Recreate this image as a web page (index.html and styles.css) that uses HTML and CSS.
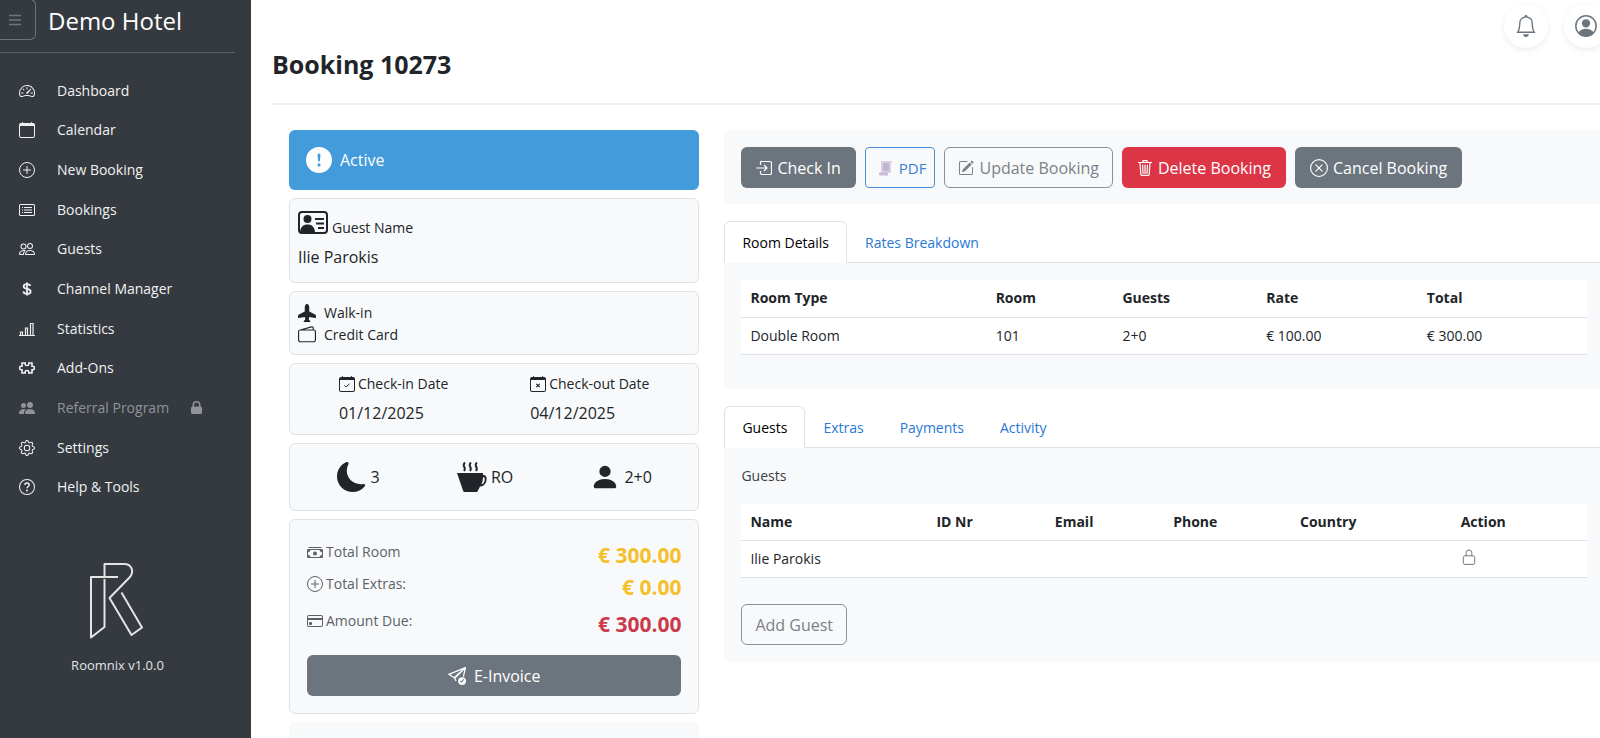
FILE: index.html
```html
<!DOCTYPE html>
<html lang="en">
<head>
    <meta charset="UTF-8">
    <meta name="viewport" content="width=device-width, initial-scale=1.0">
    <title>Booking 10273 | Demo Hotel</title>
    <link rel="stylesheet" href="styles.css">
</head>
<body>
    <div class="app">
        <aside class="sidebar">
            <div class="sidebar-header">
                <button class="menu-toggle" aria-label="Toggle menu">
                    <svg class="icon" viewBox="0 0 16 16"><path d="M2 3.5h12M2 8h12M2 12.5h12" fill="none" stroke="currentColor" stroke-width="1.3"/></svg>
                </button>
                <span class="hotel-name">Demo Hotel</span>
            </div>

            <ul class="nav-list">
                <li><a href="#"><svg class="icon" viewBox="0 0 16 16"><path d="M8 4a.5.5 0 0 1 .5.5V6a.5.5 0 0 1-1 0V4.5A.5.5 0 0 1 8 4zM3.732 5.732a.5.5 0 0 1 .707 0l.915.914a.5.5 0 1 1-.708.708l-.914-.915a.5.5 0 0 1 0-.707zM2 10a.5.5 0 0 1 .5-.5h1.586a.5.5 0 0 1 0 1H2.5A.5.5 0 0 1 2 10zm9.5 0a.5.5 0 0 1 .5-.5h1.5a.5.5 0 0 1 0 1H12a.5.5 0 0 1-.5-.5zm.754-4.246a.389.389 0 0 0-.527-.02L7.547 9.31a.91.91 0 1 0 1.302 1.258l3.434-4.297a.389.389 0 0 0-.029-.518z"/><path fill-rule="evenodd" d="M0 10a8 8 0 1 1 15.547 2.661c-.442 1.253-1.845 1.602-2.932 1.25C11.309 13.488 9.475 13 8 13c-1.474 0-3.31.488-4.615.911-1.087.352-2.49.003-2.932-1.25A7.988 7.988 0 0 1 0 10zm8-7a7 7 0 0 0-6.603 9.329c.203.575.923.876 1.68.63C4.397 12.533 6.358 12 8 12s3.604.532 4.923.96c.757.245 1.477-.056 1.68-.631A7 7 0 0 0 8 3z"/></svg>Dashboard</a></li>
                <li><a href="#"><svg class="icon" viewBox="0 0 16 16"><path d="M3.5 0a.5.5 0 0 1 .5.5V1h8V.5a.5.5 0 0 1 1 0V1h1a2 2 0 0 1 2 2v11a2 2 0 0 1-2 2H2a2 2 0 0 1-2-2V3a2 2 0 0 1 2-2h1V.5a.5.5 0 0 1 .5-.5zM1 4v10a1 1 0 0 0 1 1h12a1 1 0 0 0 1-1V4H1z"/></svg>Calendar</a></li>
                <li><a href="#"><svg class="icon" viewBox="0 0 16 16"><path d="M8 4.5v7M4.500 8h7" fill="none" stroke="currentColor" stroke-linecap="round"/><circle cx="8" cy="8" r="7.500" fill="none" stroke="currentColor"/></svg>New Booking</a></li>
                <li><a href="#"><svg class="icon" viewBox="0 0 16 16"><path d="M14.500 3a.5.5 0 0 1 .5.5v9a.5.5 0 0 1-.5.5h-13a.5.5 0 0 1-.5-.5v-9a.5.5 0 0 1 .5-.5h13zm-13-1A1.500 1.500 0 0 0 0 3.500v9A1.500 1.500 0 0 0 1.500 14h13a1.500 1.500 0 0 0 1.500-1.500v-9A1.500 1.500 0 0 0 14.500 2h-13z"/><path d="M5 5.500h8M5 8h8M5 10.500h8M3 5.500h1M3 8h1M3 10.500h1" fill="none" stroke="currentColor"/></svg>Bookings</a></li>
                <li><a href="#"><svg class="icon" viewBox="0 0 16 16"><path d="M15 14s1 0 1-1-1-4-5-4-5 3-5 4 1 1 1 1h8zm-7.978-1A.261.261 0 0 1 7 12.996c.001-.264.167-1.030.76-1.720C8.312 10.629 9.282 10 11 10c1.717 0 2.687.63 3.240 1.276.593.69.758 1.457.76 1.720l-.008.002a.274.274 0 0 1-.014.002H7.022zM11 7a2 2 0 1 0 0-4 2 2 0 0 0 0 4zm3-2a3 3 0 1 1-6 0 3 3 0 0 1 6 0zM6.936 9.280a5.880 5.880 0 0 0-1.230-.247A7.350 7.350 0 0 0 5 9c-4 0-5 3-5 4 0 .667.333 1 1 1h4.216A2.238 2.238 0 0 1 5 13c0-1.010.377-2.042 1.090-2.904.243-.294.526-.569.846-.816zM4.920 10A5.493 5.493 0 0 0 4 13H1c0-.26.164-1.030.76-1.724.545-.636 1.492-1.256 3.160-1.275zM1.500 5.500a3 3 0 1 1 6 0 3 3 0 0 1-6 0zm3-2a2 2 0 1 0 0 4 2 2 0 0 0 0-4z"/></svg>Guests</a></li>
                <li><a href="#"><svg class="icon" viewBox="0 0 16 16"><path d="M8 1.500v13M11.300 5C11.100 3.600 9.800 3.100 8 3.100c-1.900 0-3.300.8-3.300 2.300 0 3.500 6.900 1.500 6.900 5 0 1.600-1.500 2.500-3.500 2.500s-3.500-.8-3.700-2.500" fill="none" stroke="currentColor" stroke-width="1.800"/></svg>Channel Manager</a></li>
                <li><a href="#"><svg class="icon" viewBox="0 0 16 16"><path d="M0 14.500h16M1.500 14.500v-3.500h2v3.500M6.500 14.500v-7.500h2v7.500M11.500 14.500v-12h2.500v12" fill="none" stroke="currentColor" stroke-width="1.200"/></svg>Statistics</a></li>
                <li><a href="#"><svg class="icon" viewBox="0 0 16 16"><path d="M3 3h3.200v1.500c0 .7.600 1 1.800 1s1.800-.3 1.800-1V3H13v3.200h.8c.9 0 1.600.7 1.600 1.800s-.7 1.800-1.600 1.800H13V13H9.800v-1.500c0-.7-.6-1-1.800-1s-1.800.3-1.800 1V13H3V9.800h-.8C1.300 9.800.600 9.100.600 8s.7-1.800 1.600-1.800H3z" fill="none" stroke="currentColor" stroke-width="1.600"/></svg>Add-Ons</a></li>
                <li class="locked"><a href="#"><svg class="icon" viewBox="0 0 16 16"><path d="M7 14s-1 0-1-1 1-4 5-4 5 3 5 4-1 1-1 1H7zm4-6a3 3 0 1 0 0-6 3 3 0 0 0 0 6zM5.216 14A2.238 2.238 0 0 1 5 13c0-1.355.68-2.750 1.936-3.720A6.325 6.325 0 0 0 5 9c-4 0-5 3-5 4s1 1 1 1h4.216zM4.500 8a2.500 2.500 0 1 0 0-5 2.500 2.500 0 0 0 0 5z"/></svg>Referral Program<svg class="icon icon-lock" viewBox="0 0 11 13"><path d="M1.500 5.500V4a4 4 0 0 1 8 0v1.500A1.500 1.500 0 0 1 11 7v4.500A1.500 1.500 0 0 1 9.500 13h-8A1.500 1.500 0 0 1 0 11.500V7a1.500 1.500 0 0 1 1.500-1.500zm1.500 0h5V4a2.500 2.500 0 0 0-5 0z"/></svg></a></li>
                <li><a href="#"><svg class="icon" viewBox="0 0 16 16"><path d="M8 4.754a3.246 3.246 0 1 0 0 6.492 3.246 3.246 0 0 0 0-6.492zM5.754 8a2.246 2.246 0 1 1 4.492 0 2.246 2.246 0 0 1-4.492 0z"/><path d="M9.796 1.343c-.527-1.790-3.065-1.790-3.592 0l-.094.319a.873.873 0 0 1-1.255.52l-.292-.16c-1.640-.892-3.433.902-2.540 2.541l.159.292a.873.873 0 0 1-.52 1.255l-.319.094c-1.790.527-1.790 3.065 0 3.592l.319.094a.873.873 0 0 1 .52 1.255l-.16.292c-.892 1.640.901 3.434 2.541 2.540l.292-.159a.873.873 0 0 1 1.255.52l.094.319c.527 1.790 3.065 1.790 3.592 0l.094-.319a.873.873 0 0 1 1.255-.52l.292.16c1.640.893 3.434-.902 2.540-2.541l-.159-.292a.873.873 0 0 1 .52-1.255l.319-.094c1.790-.527 1.790-3.065 0-3.592l-.319-.094a.873.873 0 0 1-.52-1.255l.16-.292c.893-1.640-.902-3.433-2.541-2.540l-.292.159a.873.873 0 0 1-1.255-.52l-.094-.319zm-2.633.283c.246-.835 1.428-.835 1.674 0l.094.319a1.873 1.873 0 0 0 2.693 1.115l.291-.16c.764-.415 1.600.42 1.184 1.185l-.159.292a1.873 1.873 0 0 0 1.116 2.692l.318.094c.835.246.835 1.428 0 1.674l-.319.094a1.873 1.873 0 0 0-1.115 2.693l.16.291c.415.764-.42 1.600-1.185 1.184l-.291-.159a1.873 1.873 0 0 0-2.693 1.116l-.094.318c-.246.835-1.428.835-1.674 0l-.094-.319a1.873 1.873 0 0 0-2.692-1.115l-.292.16c-.764.415-1.600-.42-1.184-1.185l.159-.291A1.873 1.873 0 0 0 1.945 8.930l-.319-.094c-.835-.246-.835-1.428 0-1.674l.319-.094A1.873 1.873 0 0 0 3.060 4.377l-.16-.292c-.415-.764.42-1.600 1.185-1.184l.292.159a1.873 1.873 0 0 0 2.692-1.115l.094-.319z"/></svg>Settings</a></li>
                <li><a href="#"><svg class="icon" viewBox="0 0 16 16"><path d="M8 15A7 7 0 1 1 8 1a7 7 0 0 1 0 14zm0 1A8 8 0 1 0 8 0a8 8 0 0 0 0 16z"/><path d="M5.900 6C5.900 4.700 6.700 4 8 4s2.200.8 2.200 1.900c0 1.500-2.100 1.700-2.100 3.400" fill="none" stroke="currentColor" stroke-width="1.400"/><circle cx="8" cy="11.500" r="1"/></svg>Help &amp; Tools</a></li>
            </ul>

            <div class="brand">
                <svg class="brand-logo" viewBox="2 0 58 80"><path d="M31 17H4v60.500L17.500 67V19M17.500 16V4H37c8 0 10.500 8 5.500 13.500L22.500 38l22 37L55 67.500 34.500 32.500"/></svg>
                <span>Roomnix v1.0.0</span>
            </div>
        </aside>

        <main class="content">
            <header class="page-header">
                <h1>Booking 10273</h1>
                <div class="header-actions">
                    <button class="round-btn" aria-label="Notifications">
                        <svg class="icon icon-lg" viewBox="0 0 16 16"><path d="M8 16a2 2 0 0 0 2-2H6a2 2 0 0 0 2 2zM8 1.918l-.797.161A4.002 4.002 0 0 0 4 6c0 .628-.134 2.197-.459 3.742-.16.767-.376 1.566-.663 2.258h10.244c-.287-.692-.502-1.490-.663-2.258C12.134 8.197 12 6.628 12 6a4.002 4.002 0 0 0-3.203-3.920L8 1.917zM14.220 12c.223.447.481.801.78 1H1c.299-.199.557-.553.78-1C2.680 10.200 3 6.880 3 6c0-2.420 1.720-4.440 4.005-4.901a1 1 0 1 1 1.990 0A5.002 5.002 0 0 1 13 6c0 .88.32 4.200 1.220 6z"/></svg>
                    </button>
                    <button class="round-btn" aria-label="Account">
                        <svg class="icon icon-lg" viewBox="0 0 16 16"><circle cx="8" cy="8" r="7.400" fill="none" stroke="currentColor" stroke-width="1.100"/><circle cx="8" cy="6" r="3"/><path d="M2.500 12.800C3.500 11 5.500 10 8 10s4.500 1 5.500 2.800A7.500 7.500 0 0 1 8 15.500a7.500 7.500 0 0 1-5.500-2.700z"/></svg>
                    </button>
                </div>
            </header>

            <div class="booking-grid">
                <section class="summary">
                    <div class="status-card">
                        <svg class="icon icon-status" viewBox="0 0 16 16"><path d="M16 8A8 8 0 1 1 0 8a8 8 0 0 1 16 0zM8 4a.905.905 0 0 0-.9.995l.35 3.507a.552.552 0 0 0 1.100 0l.35-3.507A.905.905 0 0 0 8 4zm.002 6a1 1 0 1 0 0 2 1 1 0 0 0 0-2z"/></svg>
                        Active
                    </div>

                    <div class="card guest-card">
                        <div class="guest-label">
                            <svg class="icon icon-id" viewBox="0 0 30 24"><rect x="1" y="1" width="28" height="21" rx="3" fill="none" stroke="currentColor" stroke-width="2"/><circle cx="9.500" cy="8" r="4"/><path d="M2 21c.5-5 3-7.500 7.500-7.500S16.500 16 17 21zM17 7h9v2h-9zM18 11.500h8v2h-8zM20 16h6v2h-6z"/></svg>
                            Guest Name
                        </div>
                        <div class="value">Ilie Parokis</div>
                    </div>

                    <div class="card source-card">
                        <div class="source-row"><svg class="icon icon-md" viewBox="0 0 16 16"><path d="M6.428 1.151C6.708.591 7.213 0 8 0s1.292.592 1.572 1.151C9.861 1.730 10 2.431 10 3v3.691l5.170 2.585a1.500 1.500 0 0 1 .83 1.342V12a.5.5 0 0 1-.582.493l-5.507-.918-.375 2.253 1.318 1.318A.5.5 0 0 1 10.500 16h-5a.5.5 0 0 1-.354-.854l1.319-1.318-.376-2.253-5.507.918A.5.5 0 0 1 0 12v-1.382a1.500 1.500 0 0 1 .83-1.342L6 6.691V3c0-.568.14-1.271.428-1.849z"/></svg>Walk-in</div>
                        <div class="source-row"><svg class="icon icon-md" viewBox="0 0 16 16"><path d="M2 3.500h12a1.500 1.500 0 0 1 1.500 1.500v7.500a1.500 1.500 0 0 1-1.500 1.500H2A1.500 1.500 0 0 1 .5 12.500V5A1.500 1.500 0 0 1 2 3.500L12 .8a1 1 0 0 1 1.500 1v1.700" fill="none" stroke="currentColor"/></svg>Credit Card</div>
                    </div>

                    <div class="card dates-card">
                        <div>
                            <div class="date-label"><svg class="icon" viewBox="0 0 16 16"><path d="M3.500 0a.5.5 0 0 1 .5.5V1h8V.5a.5.5 0 0 1 1 0V1h1a2 2 0 0 1 2 2v11a2 2 0 0 1-2 2H2a2 2 0 0 1-2-2V3a2 2 0 0 1 2-2h1V.5a.5.5 0 0 1 .5-.5zM1 4v10a1 1 0 0 0 1 1h12a1 1 0 0 0 1-1V4H1z"/><path d="M5.500 9.300l1.700 1.700 3.300-3.300" fill="none" stroke="currentColor"/></svg>Check-in Date</div>
                            <div class="value">01/12/2025</div>
                        </div>
                        <div>
                            <div class="date-label"><svg class="icon" viewBox="0 0 16 16"><path d="M3.500 0a.5.5 0 0 1 .5.5V1h8V.5a.5.5 0 0 1 1 0V1h1a2 2 0 0 1 2 2v11a2 2 0 0 1-2 2H2a2 2 0 0 1-2-2V3a2 2 0 0 1 2-2h1V.5a.5.5 0 0 1 .5-.5zM1 4v10a1 1 0 0 0 1 1h12a1 1 0 0 0 1-1V4H1z"/><path d="M6.300 7.800l3.400 3.400M9.700 7.800l-3.400 3.400" fill="none" stroke="currentColor" stroke-width="1.200"/></svg>Check-out Date</div>
                            <div class="value">04/12/2025</div>
                        </div>
                    </div>

                    <div class="card stay-card">
                        <div class="stay-item"><svg class="icon icon-xl" viewBox="0 0 16 16"><path d="M6 .278a.768.768 0 0 1 .08.858 7.208 7.208 0 0 0-.878 3.460c0 4.021 3.278 7.277 7.318 7.277.527 0 1.040-.055 1.533-.16a.787.787 0 0 1 .81.316.733.733 0 0 1-.031.893A8.349 8.349 0 0 1 8.344 16C3.734 16 0 12.286 0 7.710 0 4.266 2.114 1.312 5.124.060A.752.752 0 0 1 6 .278z"/></svg>3</div>
                        <div class="stay-item"><svg class="icon icon-xl" viewBox="0 0 30 30"><path d="M0 11h26v2c3 0 4 2 3.500 5-.5 4-3 6.500-6.500 6.500L21 28.500c-.5 1-1 1.500-2 1.500H8c-1 0-1.700-.5-2-1.500zM26 15c0 2-.5 5-1.500 7.500 2-.5 3-2.500 3.200-4.500.2-2-.2-3-1.700-3z"/><path d="M8 .5c-4 3.500 2 4.500-1 8.500M14 .5c-4 3.500 2 4.500-1 8.500M20 .5c-4 3.500 2 4.500-1 8.500" fill="none" stroke="currentColor" stroke-width="2"/></svg>RO</div>
                        <div class="stay-item"><svg class="icon icon-xl" viewBox="0 0 16 16"><path d="M3 14s-1 0-1-1 1-4 6-4 6 3 6 4-1 1-1 1H3zm5-6a3 3 0 1 0 0-6 3 3 0 0 0 0 6z"/></svg>2+0</div>
                    </div>

                    <div class="card totals-card">
                        <div class="total-row">
                            <span class="total-label"><svg class="icon" viewBox="0 0 16 16"><path d="M1.500 3.500h13M2 5.500h12.500a1 1 0 0 1 1 1v6a1 1 0 0 1-1 1h-13a1 1 0 0 1-1-1v-6a1 1 0 0 1 1-1z" fill="none" stroke="currentColor" stroke-width="1.200"/><circle cx="8" cy="9.500" r="2"/><path d="M1 5.500h2.500A2.500 2.500 0 0 1 1 8zM15 5.500h-2.500A2.500 2.500 0 0 0 15 8zM1 13.500h2.500A2.500 2.500 0 0 0 1 11zM15 13.500h-2.500A2.500 2.500 0 0 1 15 11z"/></svg>Total Room</span>
                            <span class="amount">€ 300.00</span>
                        </div>
                        <div class="total-row">
                            <span class="total-label"><svg class="icon" viewBox="0 0 16 16"><path d="M8 4.500v7M4.500 8h7" fill="none" stroke="currentColor" stroke-linecap="round"/><circle cx="8" cy="8" r="7.500" fill="none" stroke="currentColor"/></svg>Total Extras:</span>
                            <span class="amount">€ 0.00</span>
                        </div>
                        <div class="total-row total-due">
                            <span class="total-label"><svg class="icon" viewBox="0 0 16 16"><path d="M0 4a2 2 0 0 1 2-2h12a2 2 0 0 1 2 2v8a2 2 0 0 1-2 2H2a2 2 0 0 1-2-2V4zm2-1a1 1 0 0 0-1 1v1h14V4a1 1 0 0 0-1-1H2zm13 4H1v5a1 1 0 0 0 1 1h12a1 1 0 0 0 1-1V7z"/><path d="M2 10a1 1 0 0 1 1-1h1a1 1 0 0 1 1 1v1a1 1 0 0 1-1 1H3a1 1 0 0 1-1-1v-1z"/></svg>Amount Due:</span>
                            <span class="amount">€ 300.00</span>
                        </div>
                        <button class="btn btn-secondary btn-block"><svg class="icon icon-md" viewBox="0 0 16 16"><path d="M15.500.5L.7 6.500l4.800 3L15.500.5 6 10l1.200 2.500M15.500.5L13.700 8.500" fill="none" stroke="currentColor" stroke-width="1.100" stroke-linejoin="round"/><path fill-rule="evenodd" d="M12.500 16a3.500 3.500 0 1 0 0-7 3.500 3.500 0 0 0 0 7zm-.3-1.900l2.200-3-.8-.5-1.600 2.100-.8-.8-.6.700z"/></svg>E-Invoice</button>
                    </div>

                    <div class="card notes-card"></div>
                </section>

                <section class="details">
                    <div class="action-bar">
                        <button class="btn btn-secondary"><svg class="icon" viewBox="0 0 16 16"><path d="M4.500 5V2A1.500 1.500 0 0 1 6 1.500h8A1.500 1.500 0 0 1 15.500 3v10a1.500 1.500 0 0 1-1.500 1.500H6A1.500 1.500 0 0 1 4.500 13v-2M0 8h11M8 5l3 3-3 3" fill="none" stroke="currentColor" stroke-width="1.200"/></svg>Check In</button>
                        <button class="btn btn-pdf"><svg class="icon" viewBox="0 0 16 16"><path d="M4 1h11v1.500h-1V13H4z" fill="#d9d0e3"/><path d="M2 12.500h9v3H3.500A1.500 1.500 0 0 1 2 14z" fill="#c9bcd8"/><path d="M6 4h6M6 6h6M6 8h6M6 10h6" stroke="#a99dbb" fill="none"/></svg>PDF</button>
                        <button class="btn btn-outline"><svg class="icon" viewBox="0 0 16 16"><path d="M15.502 1.940a.5.5 0 0 1 0 .706L14.459 3.690l-2-2L13.502.646a.5.5 0 0 1 .707 0l1.293 1.293zm-1.750 2.456-2-2L4.939 9.210a.5.5 0 0 0-.121.196l-.805 2.414a.25.25 0 0 0 .316.316l2.414-.805a.5.5 0 0 0 .196-.12l6.813-6.814z"/><path d="M1 13.500A1.500 1.500 0 0 0 2.500 15h11a1.500 1.500 0 0 0 1.500-1.500v-6a.5.5 0 0 0-1 0v6a.5.5 0 0 1-.5.5h-11a.5.5 0 0 1-.5-.5v-11a.5.5 0 0 1 .5-.5H9a.5.5 0 0 0 0-1H2.500A1.500 1.500 0 0 0 1 2.500v11z"/></svg>Update Booking</button>
                        <button class="btn btn-danger"><svg class="icon" viewBox="0 0 16 16"><path d="M1.500 2.500h13M6 2V.700h4V2M3 3l.8 11.500a1 1 0 0 0 1 .9h6.400a1 1 0 0 0 1-.9L13 3M5.600 5l.4 8.500M8 5v8.500M10.400 5l-.4 8.500" fill="none" stroke="currentColor" stroke-width="1.200" stroke-linecap="round"/></svg>Delete Booking</button>
                        <button class="btn btn-secondary"><svg class="icon icon-md" viewBox="0 0 16 16"><path d="M5.200 5.200l5.600 5.600M10.800 5.200l-5.600 5.600" fill="none" stroke="currentColor" stroke-linecap="round"/><circle cx="8" cy="8" r="7.500" fill="none" stroke="currentColor"/></svg>Cancel Booking</button>
                    </div>

                    <div class="tabs">
                        <a class="tab active" href="#">Room Details</a>
                        <a class="tab" href="#">Rates Breakdown</a>
                    </div>
                    <div class="panel room-panel">
                        <table>
                            <colgroup><col class="w-29"><col class="w-15"><col class="w-17"><col class="w-19"><col></colgroup>
                            <thead>
                                <tr><th>Room Type</th><th>Room</th><th>Guests</th><th>Rate</th><th>Total</th></tr>
                            </thead>
                            <tbody>
                                <tr><td>Double Room</td><td>101</td><td>2+0</td><td>€ 100.00</td><td>€ 300.00</td></tr>
                            </tbody>
                        </table>
                    </div>

                    <div class="tabs">
                        <a class="tab active" href="#">Guests</a>
                        <a class="tab" href="#">Extras</a>
                        <a class="tab" href="#">Payments</a>
                        <a class="tab" href="#">Activity</a>
                    </div>
                    <div class="panel guests-panel">
                        <p class="panel-title">Guests</p>
                        <table>
                            <colgroup><col class="w-22"><col class="w-14"><col class="w-14"><col class="w-15"><col class="w-19"><col></colgroup>
                            <thead>
                                <tr><th>Name</th><th>ID Nr</th><th>Email</th><th>Phone</th><th>Country</th><th>Action</th></tr>
                            </thead>
                            <tbody>
                                <tr><td>Ilie Parokis</td><td></td><td></td><td></td><td></td><td><svg class="icon cell-icon" viewBox="0 0 16 16"><path d="M5.200 7V3.800a2.800 2.800 0 0 1 5.600 0V7M4 6.800h8A1.700 1.700 0 0 1 13.700 8.500v5.200a1.700 1.700 0 0 1-1.700 1.700H4a1.700 1.700 0 0 1-1.700-1.700V8.500A1.700 1.700 0 0 1 4 6.800z" fill="none" stroke="currentColor"/></svg></td></tr>
                            </tbody>
                        </table>
                        <button class="btn btn-outline">Add Guest</button>
                    </div>
                </section>
            </div>
        </main>
    </div>
</body>
</html>
```
FILE: styles.css
```css
:root {
    --dark: #343a40;
    --text: #212529;
    --muted: #6c757d;
    --light: #f8f9fa;
    --border: #dee2e6;
    --link: #2a78d4;
    --danger: #dc3545;
    --warning: #f5c02c;
    --status: #439bdc;
}

* {
    box-sizing: border-box;
    margin: 0;
    padding: 0;
}

body {
    font-family: 'Segoe UI', 'Open Sans', sans-serif;
    font-size: 14px;
    line-height: 22px;
    color: var(--text);
    background: white;
}

a {
    text-decoration: none;
}

button {
    font-family: inherit;
    cursor: pointer;
}

.icon {
    width: 16px;
    height: 16px;
    fill: currentColor;
    flex-shrink: 0;
}

.icon-md {
    width: 18px;
    height: 18px;
}

.icon-lg {
    width: 22px;
    height: 22px;
}

.icon-xl {
    width: 30px;
    height: 30px;
}

.app {
    display: flex;
    height: 100vh;
    overflow: hidden;
}

/* Sidebar */
.sidebar {
    flex: 0 0 251px;
    padding-right: 16px;
    background: var(--dark);
    color: white;
}

.sidebar-header {
    display: flex;
    align-items: flex-start;
    gap: 12px;
    height: 53px;
    border-bottom: 1px solid #5b6167;
}

.menu-toggle {
    width: 36px;
    height: 41px;
    margin-top: -1px;
    padding-right: 6px;
    border: 1px solid var(--muted);
    border-left: none;
    border-radius: 0 6px 6px 0;
    background: none;
    color: var(--muted);
    line-height: 0;
}

.hotel-name {
    font-size: 24px;
    line-height: 42px;
}

.nav-list {
    display: grid;
    grid-auto-rows: 1fr;
    min-height: 436px;
    margin-top: 18px;
    list-style: none;
}

.nav-list a {
    display: flex;
    align-items: center;
    gap: 22px;
    height: 100%;
    padding-left: 19px;
    color: #f1f1f1;
}

.nav-list .locked a {
    color: #909498;
}

.icon-lock {
    width: 11px;
    height: 13px;
}

.brand {
    display: flex;
    flex-direction: column;
    align-items: center;
    gap: 14px;
    margin-top: 53px;
    font-size: 13px;
    color: #e4e4e4;
}

.brand-logo {
    width: 58px;
    height: 80px;
    fill: none;
    stroke: #e4e4e4;
    stroke-width: 2;
    stroke-linejoin: round;
}

/* Page */
.content {
    flex: 1;
    min-width: 0;
    padding-left: 21px;
}

.page-header {
    display: flex;
    justify-content: space-between;
    height: 105px;
    border-bottom: 2px solid #f1f1f1;
}

.page-header h1 {
    padding-top: 48px;
    font-size: 25px;
    line-height: 32px;
}

.header-actions {
    display: flex;
    gap: 16px;
    margin: 4px -8px 0 0;
}

.round-btn {
    display: grid;
    place-items: center;
    width: 44px;
    height: 44px;
    border: none;
    border-radius: 50%;
    background: white;
    color: var(--muted);
    box-shadow: 0 2px 6px rgba(0, 0, 0, 0.08);
}

.booking-grid {
    display: grid;
    grid-template-columns: 15fr 32fr;
    gap: 25px;
    padding: 25px 0 0 17px;
}

/* Left column */
.summary {
    display: flex;
    flex-direction: column;
    gap: 8px;
}

.status-card {
    display: flex;
    align-items: center;
    gap: 8px;
    padding: 16px 17px;
    border-radius: 6px;
    background: var(--status);
    color: white;
    font-size: 16px;
    line-height: 28px;
}

.icon-status {
    width: 26px;
    height: 26px;
}

.card {
    padding: 8px;
    border: 1px solid var(--border);
    border-radius: 6px;
    background: var(--light);
}

.guest-label {
    display: flex;
    align-items: flex-end;
    gap: 4px;
    height: 32px;
}

.icon-id {
    width: 30px;
    height: 24px;
    margin-bottom: 4px;
}

.value {
    padding-top: 4px;
    font-size: 16px;
    line-height: 28px;
}

.guest-card {
    padding-bottom: 11px;
}

.source-card {
    padding: 10px 8px 8px;
}

.source-row {
    display: flex;
    align-items: center;
    gap: 8px;
}

.dates-card,
.stay-card {
    display: flex;
    justify-content: space-around;
}

.dates-card {
    padding-top: 9px;
    padding-bottom: 7px;
}

.date-label,
.stay-item,
.total-label {
    display: flex;
    align-items: center;
    gap: 3px;
}

.stay-item {
    font-size: 16px;
    line-height: 50px;
    gap: 4px;
}

.totals-card {
    padding: 18px 17px 17px;
}

.total-row {
    display: flex;
    justify-content: space-between;
    color: #5c6269;
    line-height: 28px;
    height: 32px;
}

.total-label {
    height: 28px;
}

.amount {
    font-size: 21px;
    font-weight: bold;
    line-height: 34px;
    color: var(--warning);
}

.total-due {
    margin: 5px 0 16px;
}

.total-due .amount {
    color: #cb3a4c;
}

.notes-card {
    min-height: 60px;
    border-color: var(--light);
}

/* Buttons */
.btn {
    display: inline-flex;
    align-items: center;
    justify-content: center;
    gap: 5px;
    height: 41px;
    padding: 0 13px;
    border: 1px solid transparent;
    border-radius: 6px;
    background: none;
    font-size: 16px;
}

.btn-secondary {
    background: var(--muted);
    color: white;
}

.btn-danger {
    background: var(--danger);
    color: white;
}

.btn-outline {
    border-color: #8b9197;
    color: #7a8188;
}

.btn-pdf {
    gap: 6px;
    padding: 0 8px 0 11px;
    border-color: #4a90d9;
    border-radius: 4px;
    color: #3c82d2;
    font-size: 15px;
}

.action-bar .btn-secondary,
.action-bar .btn-danger {
    padding: 0 14px;
}

.btn-block {
    gap: 8px;
    width: 100%;
}

/* Right column */
.details {
    min-width: 0;
}

.action-bar {
    display: flex;
    gap: 9px;
    padding: 17px 17px 16px;
    border-radius: 6px 0 0 6px;
    background: var(--light);
}

.tabs {
    display: flex;
    margin-top: 17px;
    border-bottom: 1px solid var(--border);
}

.tab {
    margin-bottom: -1px;
    padding: 10px 17px 8px;
    border: 1px solid transparent;
    border-radius: 6px 6px 0 0;
    color: var(--link);
}

.tab.active {
    border-color: var(--border);
    border-bottom-color: white;
    background: white;
    color: black;
}

.panel {
    padding: 17px 13px 17px 17px;
    border-radius: 0 0 0 6px;
    background: var(--light);
}

.room-panel {
    padding-bottom: 34px;
}

.panel-title {
    padding-bottom: 17px;
    color: #3b4045;
}

table {
    width: 100%;
    border-collapse: collapse;
    table-layout: fixed;
    background: white;
}

th,
td {
    height: 37px;
    padding: 0 9px;
    border-bottom: 1px solid var(--border);
    text-align: left;
}

.cell-icon {
    display: block;
    margin-bottom: 4px;
    color: #777;
}

.guests-panel .btn {
    margin-top: 26px;
}

.w-14 {
    width: 14%;
}

.w-15 {
    width: 15%;
}

.w-17 {
    width: 17%;
}

.w-19 {
    width: 19%;
}

.w-22 {
    width: 22%;
}

.w-29 {
    width: 29%;
}
```
